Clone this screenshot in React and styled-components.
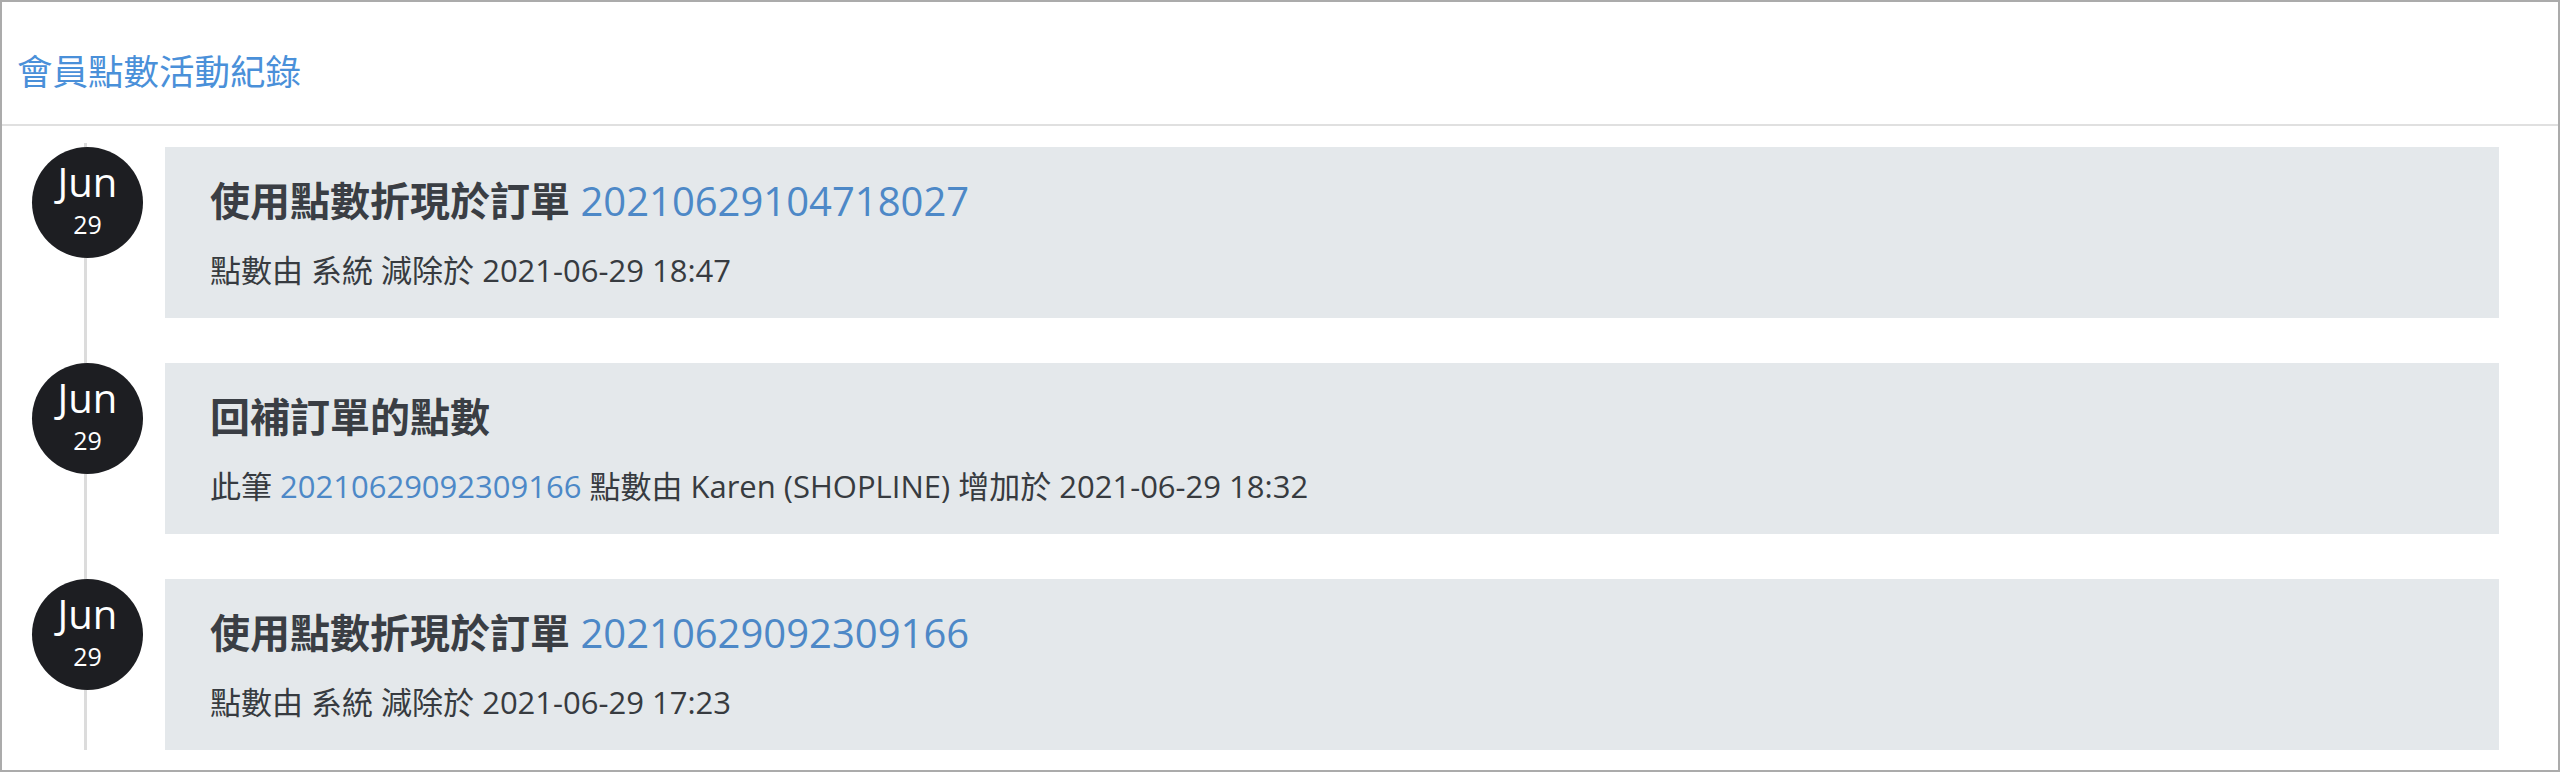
import React from 'react';
import styled, { createGlobalStyle } from 'styled-components';

const records = [
  {
    month: 'Jun',
    day: 29,
    title: '使用點數折現於訂單',
    order: '20210629104718027',
    detail: [{ text: '點數由 系統 減除於 2021-06-29 18:47' }],
  },
  {
    month: 'Jun',
    day: 29,
    title: '回補訂單的點數',
    detail: [
      { text: '此筆 ' },
      { text: '20210629092309166', link: true },
      { text: ' 點數由 Karen (SHOPLINE) 增加於 2021-06-29 18:32' },
    ],
  },
  {
    month: 'Jun',
    day: 29,
    title: '使用點數折現於訂單',
    order: '20210629092309166',
    detail: [{ text: '點數由 系統 減除於 2021-06-29 17:23' }],
  },
];

const GlobalStyle = createGlobalStyle`
  * {
    box-sizing: border-box;
  }
  body {
    margin: 0;
    background: #fff;
    font-family: "Open Sans", "Noto Sans CJK TC", sans-serif;
    color: #373b40;
  }
`;

const Panel = styled.div`
  width: 2560px;
  height: 772px;
  border: 2px solid #ababab;
  overflow: hidden;
  background: #fff;
`;

const PanelHeader = styled.div`
  height: 124px;
  padding: 42px 15px 0;
  border-bottom: 2px solid #e0e0e0;
`;

const PanelTitle = styled.h3`
  margin: 0;
  font-size: 35.5px;
  line-height: 54px;
  font-weight: 400;
  color: #4a90d9;
`;

const Timeline = styled.div`
  position: relative;
  padding: 21px 59px 0 30px;

  &::before {
    content: '';
    position: absolute;
    top: 17px;
    bottom: 0;
    left: 82px;
    width: 3px;
    background: #dcdcdc;
  }
`;

const Entry = styled.div`
  position: relative;
  display: flex;
  align-items: flex-start;
  gap: 22px;
  margin-bottom: 45px;
`;

const DateBadge = styled.div`
  flex: 0 0 111px;
  height: 111px;
  border-radius: 50%;
  background: #1d1e22;
  color: #fff;
  display: flex;
  flex-direction: column;
  align-items: center;
  padding-top: 15px;
`;

const Month = styled.span`
  font-size: 40px;
  line-height: 40px;
`;

const Day = styled.span`
  margin-top: 10px;
  font-size: 25px;
  line-height: 25px;
`;

const Card = styled.div`
  flex: 1;
  min-height: 171px;
  background: #e4e8eb;
  padding: 28px 45px 24px;
`;

const CardTitle = styled.h4`
  margin: 0;
  font-size: 40px;
  line-height: 52px;
  font-weight: 400;
`;

const TitleText = styled.span`
  font-weight: 600;
  color: #3a3e44;
`;

const OrderLink = styled.a`
  color: #4d88c7;
  text-decoration: none;
  font-weight: 400;
`;

const Detail = styled.p`
  margin: 20px 0 0;
  font-size: 31px;
  line-height: 46px;
  color: #373b40;
`;

export default function App() {
  return (
    <>
      <GlobalStyle />
      <Panel>
        <PanelHeader>
          <PanelTitle>會員點數活動紀錄</PanelTitle>
        </PanelHeader>
        <Timeline>
          {records.map((r, i) => (
            <Entry key={i}>
              <DateBadge>
                <Month>{r.month}</Month>
                <Day>{r.day}</Day>
              </DateBadge>
              <Card>
                <CardTitle>
                  <TitleText>{r.title}</TitleText>
                  {r.order && <> <OrderLink href="#">{r.order}</OrderLink></>}
                </CardTitle>
                <Detail>
                  {r.detail.map((d, j) =>
                    d.link ? (
                      <OrderLink key={j} href="#">{d.text}</OrderLink>
                    ) : (
                      <span key={j}>{d.text}</span>
                    )
                  )}
                </Detail>
              </Card>
            </Entry>
          ))}
        </Timeline>
      </Panel>
    </>
  );
}
